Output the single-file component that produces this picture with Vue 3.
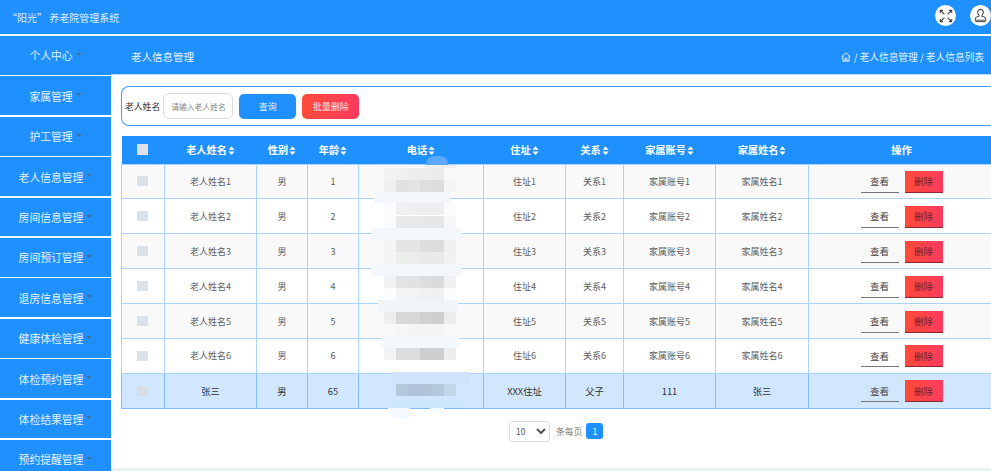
<script setup>
const menus = ['个人中心', '家属管理', '护工管理', '老人信息管理', '房间信息管理', '房间预订管理', '退房信息管理', '健康体检管理', '体检预约管理', '体检结果管理', '预约提醒管理']
const columns = [
  { label: '老人姓名', width: 92 },
  { label: '性别', width: 51 },
  { label: '年龄', width: 51 },
  { label: '电话', width: 125 },
  { label: '住址', width: 82 },
  { label: '关系', width: 58 },
  { label: '家属账号', width: 92 },
  { label: '家属姓名', width: 93 },
]
const rows = [1, 2, 3, 4, 5, 6].map((n) => ({
  name: '老人姓名' + n, sex: '男', age: n, addr: '住址' + n, rel: '关系' + n, account: '家属账号' + n, family: '家属姓名' + n,
}))
rows.push({ name: '张三', sex: '男', age: 65, addr: 'XXX住址', rel: '父子', account: '111', family: '张三', picked: true })

// the phone numbers are pixelated in the source, tiles are [x, y, w, h, colour] in page coordinates
function tileRow(y, colours) {
  return colours.map((c, i) => [384 + i * 12, y, 12, 12, c])
}
const tiles = [
  [426, 156, 22, 9, '#5aa9ff', '8px 8px 0 0'],
  [426, 165, 30, 3, '#eeeeee'],
  ...tileRow(168, ['#f2f2f2', '#f0f0f0', '#ededed', '#ececec', '#ebebeb', '#f8f8f8']),
  ...tileRow(180, ['#f0f0f0', '#e1e1e1', '#e4e4e4', '#dedede', '#dcdcdc', '#f4f4f4']),
  [374, 192, 76, 11, '#f3f6fb'],
  [384, 203, 11, 25, '#fbfbfb'],
  ...tileRow(203, ['#fbfbfb', '#f0f0f0', '#efefef', '#eeeeee', '#eeeeee', '#fbfbfb']),
  ...tileRow(216, ['#fbfbfb', '#e9e9e9', '#e8e8e8', '#e6e6e6', '#e6e6e6', '#f6f6f6']),
  [371, 228, 91, 12, '#f3f6fb'],
  ...tileRow(240, ['#f4f4f4', '#e4e4e4', '#e4e4e4', '#dddddd', '#dcdcdc', '#f0f0f0']),
  ...tileRow(252, ['#f4f4f4', '#edefed', '#ececec', '#e9e9e9', '#e9e9e9', '#f1f1f1']),
  [371, 264, 91, 12, '#f3f6fb'],
  ...tileRow(276, ['#f2f2f2', '#e3e3e3', '#e2e2e2', '#dddddd', '#dbdbdb', '#f0f0f0']),
  ...tileRow(288, ['#fcfcfc', '#f4f4f4', '#f3f3f3', '#f1f1f1', '#f0f0f0', '#fcfcfc']),
  [378, 300, 80, 12, '#f1f4f9'],
  ...tileRow(312, ['#eeeeee', '#d8d8d8', '#d8d8d8', '#d0d0d0', '#cecece', '#ececec']),
  ...tileRow(324, ['#f8f8f8', '#f6f6f6', '#f5f5f5', '#f4f4f4', '#f4f4f4', '#f8f8f8']),
  [381, 336, 78, 12, '#f3f8fd'],
  ...tileRow(348, ['#f3f3f3', '#dddddd', '#dddddd', '#cfcfcf', '#cfcfcf', '#eeeeee']),
  [393, 372, 77, 12, '#cfe4fb'],
  [392, 384, 4, 12, '#c8def2'],
  ...tileRow(384, ['#d0e7ff', '#b5c9dc', '#b0c3d8', '#b1c4d8', '#b5c9dc', '#c2d6ea']),
  [388, 396, 76, 12, '#cfe6ff'],
  [388, 408, 22, 10, '#f4f9ff', '0 0 0 10px'],
  [430, 408, 14, 4, '#f4f9ff'],
]
const tableLeft = 121
const tableTop = 136
function tileStyle(t) {
  return {
    left: t[0] - tableLeft + 'px', top: t[1] - tableTop + 'px',
    width: t[2] + 'px', height: t[3] + 'px', background: t[4], borderRadius: t[5],
  }
}
</script>

<template>
  <div class="page">
    <header class="topbar">
      <div class="brand">“阳光” 养老院管理系统</div>
      <div class="tools">
        <button class="round" aria-label="全屏">
          <svg viewBox="0 0 16 16" width="14" height="14" fill="none" stroke="#444" stroke-width="1.3">
            <path d="M1.500 4.500v-3h3M11.500 1.500h3v3M14.500 11.500v3h-3M4.500 14.500h-3v-3" />
            <path d="M2 2l4.200 4.200M14 2L9.800 6.200M14 14L9.800 9.800M2 14l4.200-4.200" />
          </svg>
        </button>
        <button class="round" aria-label="用户">
          <svg viewBox="0 0 16 16" width="15" height="15" fill="none" stroke="#555" stroke-width="1.2">
            <path d="M8 1.500c-2 0-3 1.400-3 3.200 0 1.300.6 2.400 1.400 3v1.100c-1.800.4-3.900 1-3.900 2.600v1.600h11v-1.600c0-1.600-2.100-2.200-3.900-2.600V7.700c.8-.6 1.400-1.700 1.400-3 0-1.800-1-3.200-3-3.200z" />
            <path d="M2.500 14.500h11" />
          </svg>
        </button>
      </div>
    </header>

    <div class="layout">
      <aside class="side">
        <a v-for="m in menus" :key="m" class="side-item">{{ m }}<i class="caret"></i></a>
      </aside>

      <main class="main">
        <div class="crumbbar">
          <span class="crumb-title">老人信息管理</span>
          <span class="crumbs">
            <svg viewBox="0 0 16 16" width="10" height="10" fill="none" stroke="#fff" stroke-width="1.4">
              <path d="M1 7.500L8 1.500l7 6M3 6.500v8h10v-8M6.500 14.500V10h3v4.500" />
            </svg>
            <span>/ 老人信息管理 / 老人信息列表</span>
          </span>
        </div>

        <div class="content">
          <form class="search" @submit.prevent>
            <label class="search-label">老人姓名</label>
            <input class="search-input" placeholder="请输入老人姓名" />
            <button class="btn btn-blue">查询</button>
            <button class="btn btn-red">批量删除</button>
          </form>

          <div class="table-wrap">
            <table class="grid">
              <colgroup>
                <col class="col-check" />
                <col v-for="c in columns" :key="c.label" :style="{ width: c.width + 'px' }" />
                <col class="col-ops" />
              </colgroup>
              <thead>
                <tr>
                  <th><span class="check check-head"></span></th>
                  <th v-for="c in columns" :key="c.label">
                    {{ c.label }}<svg class="sort" viewBox="0 0 8 10" width="7" height="9" fill="#fff"><path d="M4 0l3.500 4h-7zM4 10L.5 6h7z" /></svg>
                  </th>
                  <th>操作</th>
                </tr>
              </thead>
              <tbody>
                <tr v-for="(r, i) in rows" :key="i" :class="{ picked: r.picked }">
                  <td><span class="check"></span></td>
                  <td>{{ r.name }}</td>
                  <td>{{ r.sex }}</td>
                  <td>{{ r.age }}</td>
                  <td></td>
                  <td>{{ r.addr }}</td>
                  <td>{{ r.rel }}</td>
                  <td>{{ r.account }}</td>
                  <td>{{ r.family }}</td>
                  <td>
                    <div class="ops">
                      <button class="op op-view">查看</button>
                      <button class="op op-del">删除</button>
                    </div>
                  </td>
                </tr>
              </tbody>
            </table>
            <span v-for="(t, i) in tiles" :key="i" class="tile" :style="tileStyle(t)"></span>
          </div>

          <div class="pager">
            <select class="page-size">
              <option>10</option>
              <option>20</option>
            </select>
            <span class="page-text">条每页</span>
            <span class="page-num">1</span>
          </div>
        </div>
        <div class="foot-strip"></div>
      </main>
    </div>
  </div>
</template>

<style>
html, body { margin: 0; overflow: hidden; background: #fff; }
</style>

<style scoped>
* { box-sizing: border-box; }
.page {
  width: 991px; height: 471px; overflow: hidden;
  font-family: "Noto Sans CJK SC", "Liberation Sans", sans-serif;
  display: flex; flex-direction: column;
}
.topbar {
  height: 36px; flex: none;
  background: #1e90ff; border-bottom: 2px solid #fff;
  display: flex; align-items: center; justify-content: space-between;
  padding: 0 0 0 7px;
}
.brand { color: #dcefff; font-size: 10px; }
.tools { display: flex; gap: 14px; margin-top: -3px; }
.round {
  width: 21px; height: 21px; padding: 0; border: 0; border-radius: 50%;
  background: #fff; display: flex; align-items: center; justify-content: center;
}
.layout { flex: 1; display: flex; min-height: 0; }
.side { width: 111px; flex: none; display: flex; flex-direction: column; gap: 1.500px; overflow: hidden; }
.side-item {
  flex: none; height: 38.900px;
  background: #1e90ff; color: #e4f2ff; font-size: 10.800px;
  display: flex; align-items: center; justify-content: center;
}
.caret {
  width: 0; height: 0; margin: -2px 0 0 3px;
  border-left: 3px solid transparent; border-right: 3px solid transparent;
  border-top: 3px solid #41709f;
}
.main { flex: 1; min-width: 0; display: flex; flex-direction: column; position: relative; overflow: hidden; }
.crumbbar {
  height: 39px; flex: none;
  background: #1e90ff; border-bottom: 1px solid #b5daff;
  display: flex; align-items: center; justify-content: space-between;
  padding: 3px 7px 0 20px; color: #e4f2ff;
}
.crumb-title { font-size: 10.500px; }
.crumbs { font-size: 9.700px; display: flex; align-items: center; gap: 3px; }
.content { flex: 1; padding: 11px 0 0 10px; min-height: 0; }
.search {
  height: 40px; display: flex; align-items: center;
  border: 1px solid #3f9dfb; border-right: 0; border-radius: 8px 0 0 8px;
  padding-left: 3px; margin-bottom: 10px; background: #fff;
}
.search-label { font-size: 8.800px; color: #333; margin-right: 3px; white-space: nowrap; }
.search-input {
  width: 70px; height: 26px; padding: 0 0 0 7px;
  border: 1px solid #dcdcdc; border-radius: 6px;
  font: 7.800px "Noto Sans CJK SC", sans-serif; outline: 0;
}
.search-input::placeholder { color: #888; }
.btn {
  width: 57px; height: 25px; border: 0; border-radius: 5px; margin-left: 6px;
  color: #fff; font: 9px "Noto Sans CJK SC", sans-serif;
}
.btn-blue { background: #1e90ff; color: #e0f0ff; }
.btn-red { background: linear-gradient(90deg, #ff4b38, #ff3a60); color: #ffe4e4; }
.table-wrap { position: relative; width: 873px; }
.grid { width: 873px; table-layout: fixed; border-collapse: collapse; font-size: 9px; color: #5e5e5e; }
.col-check { width: 43px; }
.col-ops { width: 186px; }
.grid th {
  height: 28px; padding: 0; background: #1e90ff; color: #fff;
  font-size: 10.200px; font-weight: 700; text-align: center;
}
.grid td {
  height: 34.900px; padding: 0; text-align: center;
  border: 1px solid #a9d4ff;
}
.grid tbody tr:nth-child(odd) td { background: #f9f9f9; }
.grid tbody tr.picked td { background: #d0e7ff; color: #333; border-color: #82bdfa; font-size: 9.300px; }
.sort { margin-left: 1px; vertical-align: -1px; }
.check { display: block; width: 11px; height: 10px; margin: 0 0 0 15px; background: #dde1e8; }
.check-head { height: 11px; background: #dee1e6; }
.grid tbody tr.picked .check { background: #d6dfe8; }
.ops { display: flex; justify-content: center; gap: 6px; padding-top: 1px; }
.op {
  width: 38px; height: 22px; padding: 0; border: 0;
  font: 9.500px "Noto Sans CJK SC", sans-serif;
}
.op-view { background: transparent; color: #444; border-bottom: 1px solid #777; }
.op-del {
  background: linear-gradient(90deg, #ff4a38, #ff3b5f); color: #6d2430;
  border-bottom: 1px solid #8a2a2a;
}
.tile { position: absolute; pointer-events: none; }
.pager { display: flex; align-items: center; margin: 12px 0 0 388px; }
.page-size {
  width: 41px; height: 21px; background: #fff; border: 1px solid #ddd; border-radius: 3px;
  font: 8.500px "Noto Sans CJK SC", sans-serif; color: #555; padding-left: 2px;
}
.page-text { font-size: 8.800px; color: #777; margin-left: 6px; }
.page-num {
  width: 17px; height: 16px; margin-left: 4px; border-radius: 3px; background: #1e90ff; color: #fff;
  font-size: 8.500px; display: flex; align-items: center; justify-content: center;
}
.foot-strip { position: absolute; left: 0; right: 0; bottom: 0; height: 3px; background: #e6f2ef; }
</style>
